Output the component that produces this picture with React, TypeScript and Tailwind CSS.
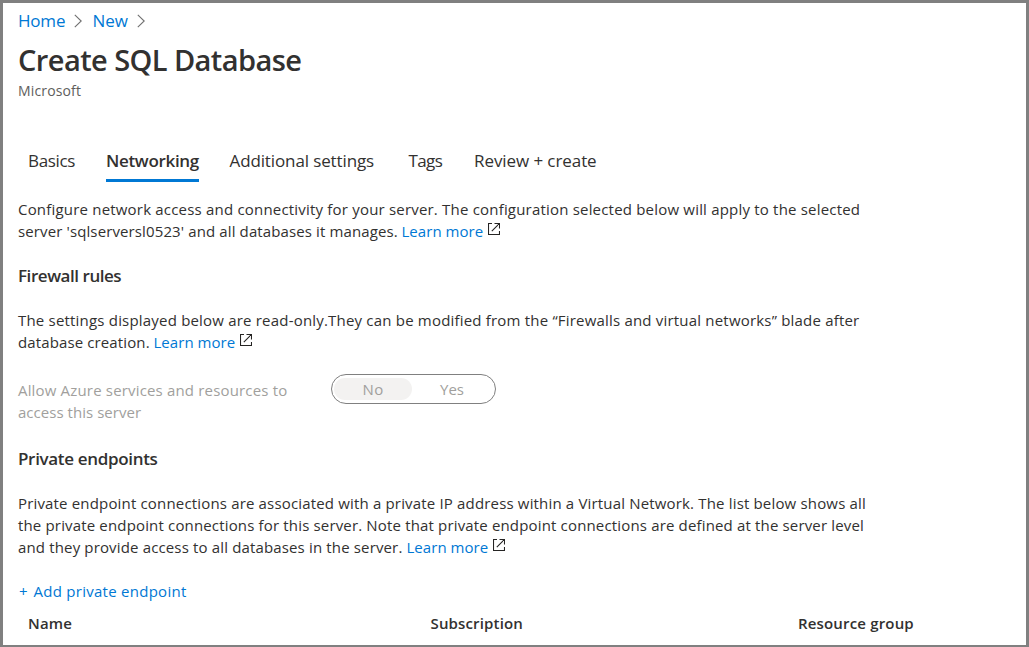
import type { ReactNode } from "react";

function Chevron() {
  return (
    <svg className="h-[14px] w-[9px] shrink-0" viewBox="0 0 9 14" fill="none" stroke="#707070" strokeWidth="1.1">
      <path d="M.8.8 7.2 7 .8 13.2" />
    </svg>
  );
}

function ExternalIcon() {
  return (
    <svg className="ml-[5px] mt-[3px] h-[12px] w-[12px] shrink-0" viewBox="0 0 12 12" fill="none" stroke="#252423" strokeWidth="1.1">
      <path d="M4 .5H.5v11h11V8M6.5.5h5v5M11.3.7 3.8 8.2" />
    </svg>
  );
}

function Line({ className, children }: { className: string; children: ReactNode }) {
  return <div className={`h-[22px] ${className}`}>{children}</div>;
}

function LearnMore() {
  return (
    <>
      <a className="tracking-[0.04px] text-[#0078d4]">Learn more</a>
      <ExternalIcon />
    </>
  );
}

export default function App() {
  return (
    <main className="h-[647px] w-[1029px] overflow-hidden whitespace-nowrap border-[3px] border-b-2 border-[#808080] bg-white pl-[15px] font-['Open_Sans','Noto_Sans',sans-serif] text-[15px] leading-[22px] text-[#323130]">
      <nav className="flex h-[35px] items-center text-[17px] text-[#0078d4]">
        <a className="w-[56px] tracking-[-0.2px]">Home</a>
        <Chevron />
        <a className="ml-[9.5px] w-[44.5px]">New</a>
        <Chevron />
      </nav>
      <h1 className="h-[42px] text-[29px] font-semibold leading-[44px] tracking-[-0.57px]">Create SQL Database</h1>
      <div className="h-[22px] text-[14px] tracking-[0.15px] text-[#605e5c]">Microsoft</div>

      <div className="mt-[40px] flex h-[40px] pl-[10px] text-[17px] leading-[38px]">
        <span className="w-[78px] tracking-[-0.35px]">Basics</span>
        <span className="w-[93px] border-b-[3px] border-[#0078d4] font-semibold tracking-[-0.32px]">Networking</span>
        <span className="ml-[30.5px] w-[179px] tracking-[-0.12px]">Additional settings</span>
        <span className="w-[65.5px] tracking-[-0.6px]">Tags</span>
        <span className="tracking-[-0.08px]">Review + create</span>
      </div>

      <section className="mt-[16px]">
        <Line className="tracking-[0.195px]">Configure network access and connectivity for your server. The configuration selected below will apply to the selected</Line>
        <Line className="flex">
          <span className="w-[383.5px] tracking-[0.12px]">server 'sqlserversl0523' and all databases it manages.</span>
          <LearnMore />
        </Line>
      </section>

      <h2 className="mt-[22px] h-[22px] text-[17px] font-semibold leading-[24px] tracking-[-0.45px]">Firewall rules</h2>
      <section className="mt-[23px]">
        <Line className="tracking-[0.195px]">The settings displayed below are read-only.They can be modified from the “Firewalls and virtual networks” blade after</Line>
        <Line className="flex">
          <span className="w-[135.5px] tracking-[0.12px]">database creation.</span>
          <LearnMore />
        </Line>
      </section>

      <div className="mt-[21px] flex h-[50px] text-[#a19f9d]">
        <div className="w-[313px] pt-[5px]">
          <Line className="tracking-[0.17px]">Allow Azure services and resources to</Line>
          <Line className="tracking-[0.04px]">access this server</Line>
        </div>
        <div className="flex h-[30px] w-[165px] rounded-full border border-[#808080] p-[3px] pl-[2px] text-center leading-[23px]">
          <span className="h-[22px] w-[78px] rounded-full bg-[#f3f2f1] tracking-[0.3px]">No</span>
          <span className="flex-1">Yes</span>
        </div>
      </div>

      <h2 className="mt-[23px] h-[22px] text-[17px] font-semibold leading-[24px] tracking-[-0.33px]">Private endpoints</h2>
      <section className="mt-[23px]">
        <Line className="tracking-[0.168px]">Private endpoint connections are associated with a private IP address within a Virtual Network. The list below shows all</Line>
        <Line className="tracking-[0.16px]">the private endpoint connections for this server. Note that private endpoint connections are defined at the server level</Line>
        <Line className="flex">
          <span className="w-[388.5px] tracking-[0.15px]">and they provide access to all databases in the server.</span>
          <LearnMore />
        </Line>
      </section>

      <div className="mt-[22px] flex h-[22px] pl-px text-[#0078d4]">
        <span className="w-[14.5px]">+</span>
        <span className="tracking-[0.27px]">Add private endpoint</span>
      </div>
      <div className="mt-[10px] flex h-[22px] pl-[10px] font-semibold">
        <span className="w-[402.5px] tracking-[0.2px]">Name</span>
        <span className="w-[367.5px] tracking-[0.15px]">Subscription</span>
        <span className="tracking-[0.17px]">Resource group</span>
      </div>
    </main>
  );
}
